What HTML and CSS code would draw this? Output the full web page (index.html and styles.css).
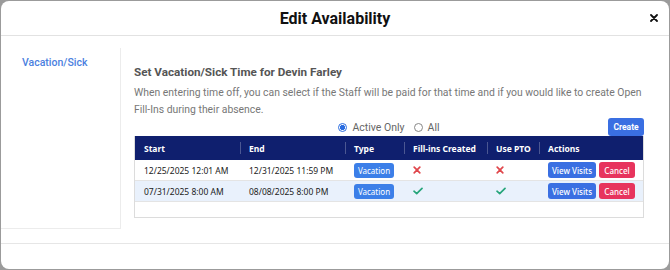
FILE: index.html
```html
<!DOCTYPE html>
<html lang="en">
<head>
    <meta charset="UTF-8">
    <meta name="viewport" content="width=device-width, initial-scale=1.0">
    <title>Edit Availability</title>
    <link rel="stylesheet" href="styles.css">
</head>
<body>
    <div class="modal">
        <div class="modal-header">
            <div class="modal-title">Edit Availability</div>
            <button class="close-btn" aria-label="Close">
                <svg width="8" height="8" viewBox="0 0 8 8"><path d="M1 1L7 7M7 1L1 7" stroke="#111" stroke-width="1.8" stroke-linecap="round"/></svg>
            </button>
        </div>

        <div class="modal-body">
            <div class="sidebar">
                <a class="side-link" href="#">Vacation/Sick</a>
            </div>

            <div class="content">
                <div class="section-title">Set Vacation/Sick Time for Devin Farley</div>
                <p class="description">When entering time off, you can select if the Staff will be paid for that time and if you would like to create Open <span class="nowrap">Fill-Ins</span> during their absence.</p>

                <div class="filter-row">
                    <div class="radios">
                        <label class="radio"><span class="radio-dot checked"></span>Active Only</label>
                        <label class="radio"><span class="radio-dot"></span>All</label>
                    </div>
                    <button class="btn btn-blue create-btn">Create</button>
                </div>

                <div class="table-wrap">
                    <table class="visits">
                        <thead>
                            <tr>
                                <th class="col-start">Start</th>
                                <th class="col-end">End</th>
                                <th class="col-type">Type</th>
                                <th class="col-fill">Fill-ins Created</th>
                                <th class="col-pto">Use PTO</th>
                                <th class="col-actions">Actions</th>
                            </tr>
                        </thead>
                        <tbody>
                            <tr>
                                <td>12/25/2025 12:01 AM</td>
                                <td>12/31/2025 11:59 PM</td>
                                <td><span class="tag">Vacation</span></td>
                                <td class="icon-cell">
                                    <svg width="8" height="8" viewBox="0 0 8 8"><path d="M1.2 1.2L6.8 6.8M6.8 1.2L1.2 6.8" stroke="#e0474c" stroke-width="1.7" stroke-linecap="round"/></svg>
                                </td>
                                <td class="icon-cell">
                                    <svg width="8" height="8" viewBox="0 0 8 8"><path d="M1.2 1.2L6.8 6.8M6.8 1.2L1.2 6.8" stroke="#e0474c" stroke-width="1.7" stroke-linecap="round"/></svg>
                                </td>
                                <td class="actions">
                                    <button class="btn btn-blue">View Visits</button><button class="btn btn-red">Cancel</button>
                                </td>
                            </tr>
                            <tr class="alt">
                                <td>07/31/2025 8:00 AM</td>
                                <td>08/08/2025 8:00 PM</td>
                                <td><span class="tag">Vacation</span></td>
                                <td class="icon-cell">
                                    <svg width="10" height="8" viewBox="0 0 10 8"><path d="M1 4.2L3.7 6.6L9 1.4" fill="none" stroke="#26a57a" stroke-width="1.7" stroke-linecap="round" stroke-linejoin="round"/></svg>
                                </td>
                                <td class="icon-cell">
                                    <svg width="10" height="8" viewBox="0 0 10 8"><path d="M1 4.2L3.7 6.6L9 1.4" fill="none" stroke="#26a57a" stroke-width="1.7" stroke-linecap="round" stroke-linejoin="round"/></svg>
                                </td>
                                <td class="actions">
                                    <button class="btn btn-blue">View Visits</button><button class="btn btn-red">Cancel</button>
                                </td>
                            </tr>
                        </tbody>
                    </table>
                </div>
            </div>
        </div>

        <div class="modal-footer"></div>
    </div>
</body>
</html>
```

FILE: styles.css
```css
body {
    margin: 0;
    padding: 1px;
    height: 268px;
    background: #9b9b9b;
    font-family: Roboto, "Noto Sans", sans-serif;
    overflow: hidden;
}

.modal {
    height: 268px;
    background: #fff;
    border-radius: 8px;
    display: flex;
    flex-direction: column;
    overflow: hidden;
}

.modal-header {
    height: 34px;
    flex-shrink: 0;
    border-bottom: 1px solid #e2e2e2;
    display: flex;
    align-items: center;
    justify-content: center;
    position: relative;
}

.modal-title {
    font-size: 16px;
    font-weight: bold;
    color: #111;
}

.close-btn {
    position: absolute;
    right: 11px;
    top: 13px;
    padding: 0;
    border: none;
    background: none;
    line-height: 0;
    cursor: pointer;
}

.modal-body {
    flex: 1;
    display: flex;
    align-items: flex-start;
    padding-top: 12px;
    border-bottom: 1px solid #e6e6e6;
}

.sidebar {
    width: 98px;
    height: 177px;
    padding: 3px 0 0 21px;
    border-right: 1px solid #ececec;
    border-bottom: 1px solid #ececec;
    flex-shrink: 0;
}

.side-link {
    font-size: 10.5px;
    font-weight: 500;
    color: #4b7fe0;
    text-decoration: none;
}

.content {
    width: 510px;
    margin-left: 13px;
    padding-top: 17px;
}

.section-title {
    font-size: 11.7px;
    line-height: 14px;
    font-weight: bold;
    color: #555;
}

.description {
    margin: 6px 0 0;
    font-size: 10.4px;
    line-height: 16.5px;
    color: #777;
}

.nowrap {
    white-space: nowrap;
}

.filter-row {
    display: grid;
    grid-template-columns: 1fr auto 1fr;
    align-items: center;
    height: 18px;
}

.radios {
    grid-column: 2;
    display: flex;
    gap: 9px;
    font-size: 10.5px;
    color: #666;
}

.radio {
    display: flex;
    align-items: center;
    gap: 5px;
}

.radio-dot {
    width: 9px;
    height: 9px;
    border: 1px solid #888;
    border-radius: 50%;
    box-sizing: border-box;
}

.radio-dot.checked {
    border-color: #2b6de0;
    background: radial-gradient(circle, #2b6de0 0 2.4px, #fff 2.9px);
}

.btn {
    border: none;
    border-radius: 3px;
    color: #fff;
    font-family: "Noto Sans", sans-serif;
    font-size: 8px;
    padding: 0;
    cursor: pointer;
}

.btn-blue {
    background: #3a6fe2;
}

.btn-red {
    background: #e7345d;
}

.create-btn {
    grid-column: 3;
    justify-self: end;
    width: 36px;
    height: 18px;
    font-family: Roboto, sans-serif;
    font-weight: bold;
    font-size: 8.5px;
    border-radius: 3px;
}

.table-wrap {
    border: 1px solid #dcdcdc;
    border-top: none;
    padding-bottom: 15px;
}

.visits {
    width: 100%;
    border-collapse: collapse;
    table-layout: fixed;
    font-family: "Noto Sans", sans-serif;
    font-size: 8.5px;
    color: #222;
}

.visits th {
    background: #0f1f6e;
    color: #fff;
    font-weight: bold;
    text-align: left;
    height: 24px;
    padding: 0 0 0 9px;
    position: relative;
}

.visits th + th::before {
    content: "";
    position: absolute;
    left: 0;
    top: 6px;
    bottom: 6px;
    width: 1px;
    background: rgba(255, 255, 255, 0.25);
}

.col-start { width: 96px; }
.col-end { width: 96px; }
.col-type { width: 50px; }
.col-fill { width: 74px; }
.col-pto { width: 43px; }

.visits td {
    height: 20px;
    padding: 0 0 0 9px;
    border-bottom: 1px solid #e4e4e4;
    vertical-align: middle;
}

.visits tr.alt td {
    background: #e9f1fc;
}

.tag {
    display: inline-block;
    width: 40px;
    height: 15px;
    line-height: 15px;
    text-align: center;
    background: #3c7fe8;
    color: #fff;
    border-radius: 3px;
    font-size: 8px;
}

.icon-cell {
    line-height: 0;
}

.actions {
    white-space: nowrap;
    line-height: 0;
}

.actions .btn {
    height: 16px;
    font-weight: 500;
}

.actions .btn-blue {
    width: 48px;
    margin-right: 3px;
}

.actions .btn-red {
    width: 36px;
}

.modal-footer {
    height: 25px;
    flex-shrink: 0;
}
```
